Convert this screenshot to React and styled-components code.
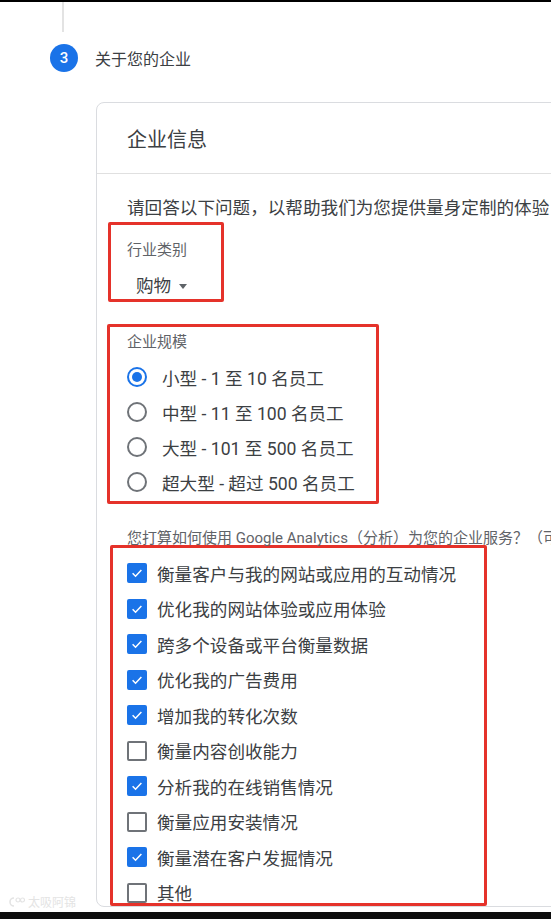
import React from 'react';
import styled, {createGlobalStyle} from 'styled-components';

const sizes = [
	{label: '小型 - 1 至 10 名员工', checked: true},
	{label: '中型 - 11 至 100 名员工'},
	{label: '大型 - 101 至 500 名员工'},
	{label: '超大型 - 超过 500 名员工'}
];

const uses = [
	{label: '衡量客户与我的网站或应用的互动情况', checked: true},
	{label: '优化我的网站体验或应用体验', checked: true},
	{label: '跨多个设备或平台衡量数据', checked: true},
	{label: '优化我的广告费用', checked: true},
	{label: '增加我的转化次数', checked: true},
	{label: '衡量内容创收能力'},
	{label: '分析我的在线销售情况', checked: true},
	{label: '衡量应用安装情况'},
	{label: '衡量潜在客户发掘情况', checked: true},
	{label: '其他'}
];

const App = () => (
	<Page>
		<GlobalStyle />
		<TopBar />
		<Content>
			<Rail />
			<StepRow>
				<StepBadge>3</StepBadge>
				<StepTitle>关于您的企业</StepTitle>
			</StepRow>

			<Card>
				<CardHeader>企业信息</CardHeader>
				<CardBody>
					<Intro>请回答以下问题，以帮助我们为您提供量身定制的体验</Intro>

					<Marked width={116} offset={-19} pad="15px 0 1px 16px" top={2}>
						<Label>行业类别</Label>
						<Dropdown>
							购物
							<Caret />
						</Dropdown>
					</Marked>

					<Marked width={272} offset={-20} pad="5px 0 1.5px 17px" top={22}>
						<Label>企业规模</Label>
						<RadioList>
							{sizes.map(s => (
								<OptionRow key={s.label} gap={15} height={35}>
									<Radio checked={s.checked} />
									{s.label}
								</OptionRow>
							))}
						</RadioList>
					</Marked>

					<Question>您打算如何使用 Google Analytics（分析）为您的企业服务？（可多选）</Question>

					<Marked width={377} offset={-17} pad="15px 0 0 14px" top={-2}>
						<CheckList>
							{uses.map(u => (
								<OptionRow key={u.label} gap={10} height={20}>
									<Checkbox checked={u.checked}>
										{u.checked && (
											<svg width="14" height="14" viewBox="0 0 24 24">
												<path d="M4.5 12.5l5 5L19.5 7" fill="none" stroke="#fff" strokeWidth="2.6" />
											</svg>
										)}
									</Checkbox>
									{u.label}
								</OptionRow>
							))}
						</CheckList>
					</Marked>
				</CardBody>
			</Card>
		</Content>
		<BottomBar />
		<Watermark>
			<svg width="18" height="12" viewBox="0 0 18 12">
				<path d="M6 2a4 4 0 1 0 0 8" fill="none" stroke="#e4e4e4" strokeWidth="1.6" />
				<circle cx="10" cy="4" r="2" fill="none" stroke="#e4e4e4" strokeWidth="1.2" />
				<circle cx="14.5" cy="4" r="2" fill="none" stroke="#e4e4e4" strokeWidth="1.2" />
			</svg>
			太吸阿锦
		</Watermark>
	</Page>
);

export default App;

const GlobalStyle = createGlobalStyle`
	html, body {
		margin: 0;
		padding: 0;
		background: #fff;
	}
	body {
		font-family: Roboto, "Noto Sans CJK SC", sans-serif;
	}
`;

const Page = styled.div`
	position: relative;
	height: 919px;
	display: flex;
	flex-direction: column;
	overflow: hidden;
	background: #fff;
`;

const TopBar = styled.div`
	height: 2px;
	flex-shrink: 0;
	background: #000;
`;

const BottomBar = styled.div`
	height: 7px;
	flex-shrink: 0;
	background: #0d0d0d;
`;

const Content = styled.div`
	flex: 1;
	min-height: 0;
	overflow: hidden;
`;

const Rail = styled.div`
	width: 2px;
	height: 30px;
	margin-left: 62px;
	background: #e3e3e3;
`;

const StepRow = styled.div`
	display: flex;
	align-items: center;
	gap: 17px;
	height: 28px;
	margin-top: 12px;
	padding-left: 50px;
`;

const StepBadge = styled.div`
	width: 28px;
	height: 28px;
	border-radius: 50%;
	background: #1a73e8;
	color: #fff;
	font-size: 15px;
	font-weight: 500;
	display: flex;
	align-items: center;
	justify-content: center;
`;

const StepTitle = styled.div`
	font-size: 16px;
	color: #3c4043;
`;

const Card = styled.div`
	width: 640px;
	margin: 30px 0 0 96px;
	border: 1px solid #dadce0;
	border-radius: 8px;
	box-sizing: border-box;
`;

const CardHeader = styled.div`
	height: 70px;
	padding: 0 30px;
	display: flex;
	align-items: center;
	border-bottom: 1px solid #e0e0e0;
	font-size: 20px;
	color: #3c4043;
`;

const CardBody = styled.div`
	padding: 22px 30px 0;
`;

const Intro = styled.div`
	font-size: 17.6px;
	line-height: 24px;
	color: #3c4043;
	white-space: nowrap;
`;

const Marked = styled.div`
	box-sizing: border-box;
	width: ${p => p.width}px;
	margin-left: ${p => p.offset}px;
	margin-top: ${p => p.top}px;
	padding: ${p => p.pad};
	border: 3px solid #e5322a;
	border-radius: 2px;
`;

const Label = styled.div`
	font-size: 15px;
	line-height: 20px;
	color: #5f6368;
`;

const Dropdown = styled.div`
	display: flex;
	align-items: center;
	gap: 8px;
	margin-top: 14px;
	padding-left: 9px;
	font-size: 17.6px;
	line-height: 24px;
	color: #3c4043;
`;

const Caret = styled.span`
	width: 0;
	height: 0;
	border-left: 4px solid transparent;
	border-right: 4px solid transparent;
	border-top: 5px solid #5f6368;
`;

const RadioList = styled.div`
	margin-top: 7.5px;
`;

const CheckList = styled.div`
	display: flex;
	flex-direction: column;
	gap: 15.5px;
`;

const OptionRow = styled.div`
	display: flex;
	align-items: center;
	gap: ${p => p.gap}px;
	height: ${p => p.height}px;
	font-size: 17.6px;
	color: #3c4043;
	white-space: nowrap;
`;

const Radio = styled.span`
	width: 20px;
	height: 20px;
	box-sizing: border-box;
	border-radius: 50%;
	border: 2px solid ${p => (p.checked ? '#1a73e8' : '#6f7378')};
	display: flex;
	align-items: center;
	justify-content: center;
	flex-shrink: 0;

	&::after {
		content: '';
		width: 10px;
		height: 10px;
		border-radius: 50%;
		background: ${p => (p.checked ? '#1a73e8' : 'transparent')};
	}
`;

const Checkbox = styled.span`
	width: 20px;
	height: 20px;
	box-sizing: border-box;
	border-radius: 2px;
	flex-shrink: 0;
	display: flex;
	align-items: center;
	justify-content: center;
	background: ${p => (p.checked ? '#1a73e8' : '#fff')};
	border: 2px solid ${p => (p.checked ? '#1a73e8' : '#6f7378')};
`;

const Question = styled.div`
	margin-top: 25px;
	font-size: 15px;
	line-height: 18px;
	color: #5f6368;
	white-space: nowrap;
`;

const Watermark = styled.div`
	position: absolute;
	left: 8px;
	bottom: 9px;
	display: flex;
	align-items: center;
	gap: 2px;
	font-size: 12px;
	color: #e4e4e4;
`;
